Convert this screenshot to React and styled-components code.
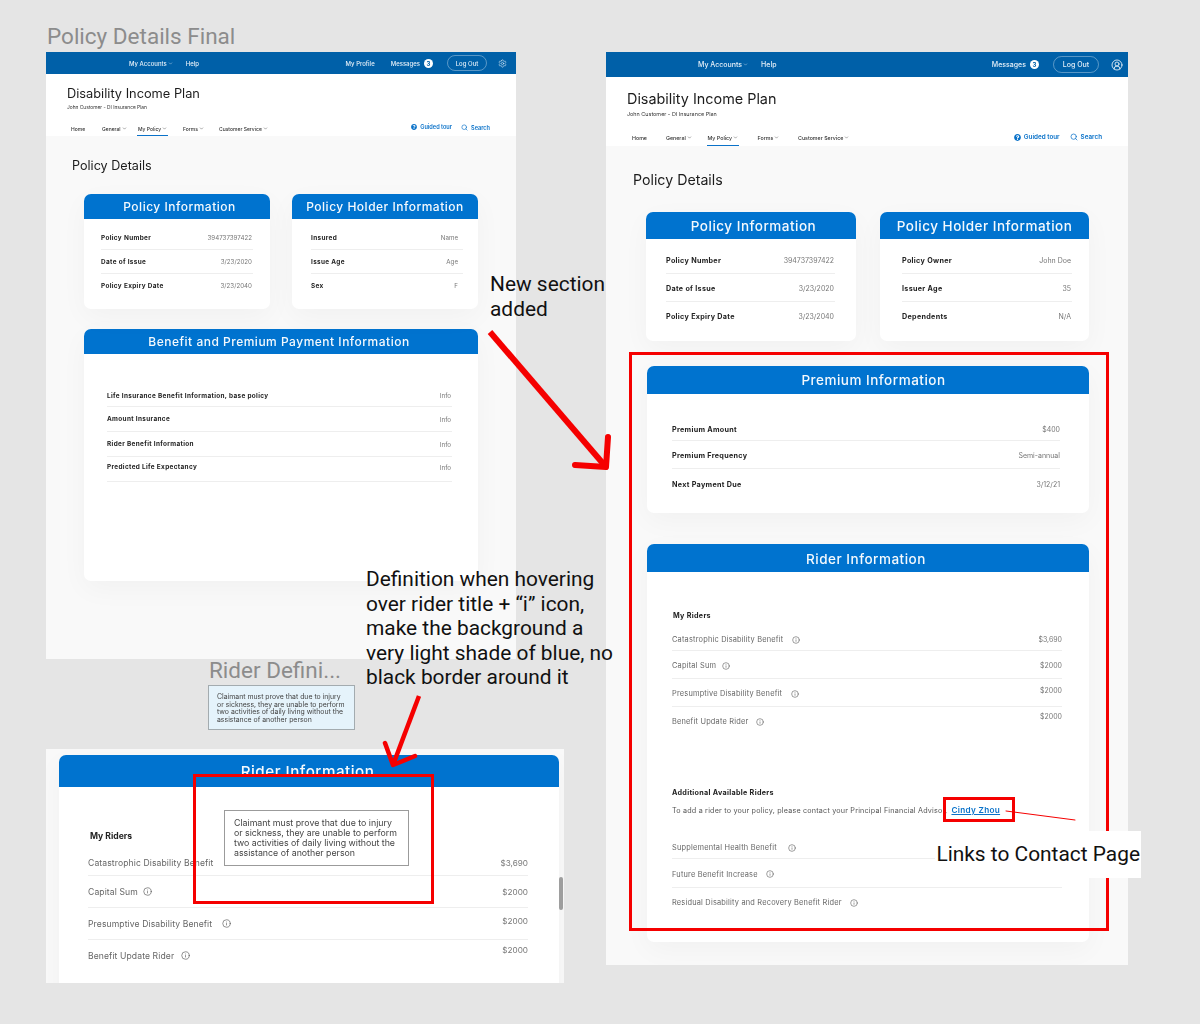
import React from 'react'
import styled, { createGlobalStyle } from 'styled-components'
import { ChevronDown, Settings, CircleUserRound, Search, Info } from 'lucide-react'
import { FaQuestionCircle } from 'react-icons/fa'

const GlobalStyle = createGlobalStyle`
  html, body { margin: 0; padding: 0; background: #e5e5e5; }
  * { box-sizing: border-box; }
`

const Canvas = styled.div`
  position: relative;
  width: 1200px;
  height: 1024px;
  overflow: hidden;
  background: #e5e5e5;
  font-family: Inter, "Open Sans", sans-serif;
`

const Frame = styled.section`
  position: absolute;
  left: ${p => p.$x}px;
  top: ${p => p.$y}px;
  width: ${p => p.$w}px;
  height: ${p => p.$h}px;
  background: #f9f9f9;
  overflow: hidden;
  filter: blur(0.35px);
`

const SmallFrame = styled(Frame)`
  --bar-h: 22px;
  --bar-pad: 83px;
  --bar-pad-r: 9px;
  --bar-font: 6px;
  --bar-gap: 13px;
  --bar-gap-r: 11px;
  --pill-left: 3px;
  --pill-w: 40px;
  --pill-h: 16px;
  --head-h: 62px;
  --head-top: 12px;
  --title: 12.8px;
  --title-h: 16px;
  --sub: 4.85px;
  --sub-top: 1px;
  --nav: 5px;
  --nav-top: 11px;
  --nav-h: 14px;
  --nav-left: 4px;
  --nav-cols: 31px 36px 45px 36px auto;
  --tool-font: 5.6px;
  --tool-gap: 9px;
  --tool-top: 2px;
  --tool-right: 26px;
  --page-title: 12.6px;
  --page-h: 16px;
  --page-top: 22px;
  --page-left: 26px;
  --card-title: 12px;
  --label: 6.4px;
  --label-ls: 0.35px;
  --value: 6.2px;
  --row-nudge: 0;
`

const BigFrame = styled(Frame)`
  --bar-h: 25px;
  --bar-pad: 92px;
  --bar-pad-r: 5px;
  --bar-font: 7px;
  --bar-gap: 13px;
  --bar-gap-r: 12px;
  --pill-left: 2px;
  --pill-w: 46px;
  --pill-h: 17px;
  --head-h: 69px;
  --head-top: 13px;
  --title: 14.4px;
  --title-h: 18px;
  --sub: 5.45px;
  --sub-top: 2px;
  --nav: 5.3px;
  --nav-top: 12px;
  --nav-h: 16px;
  --nav-left: 5px;
  --nav-cols: 34px 41.5px 50px 40.5px auto;
  --tool-font: 6.3px;
  --tool-gap: 10px;
  --tool-top: 3px;
  --tool-right: 26px;
  --page-title: 14.2px;
  --page-h: 18px;
  --page-top: 25px;
  --page-left: 27px;
  --card-title: 13.5px;
  --label: 7.2px;
  --label-ls: 0.3px;
  --value: 7px;
  --name: 7.4px;
  --name-ls: 0.2px;
  --row-nudge: 2px;
`

const ZoomFrame = styled(Frame)`
  --card-title: 15.2px;
  --label: 8.6px;
  --label-ls: 0;
  --value: 8.2px;
  --name: 8.6px;
  --name-ls: 0.1px;
  --row-nudge: 0;
`

const TopBar = styled.header`
  display: flex;
  align-items: center;
  height: var(--bar-h);
  padding: 0 var(--bar-pad-r) 0 var(--bar-pad);
  background: #0060a8;
  color: #e6f0f8;
  font-size: var(--bar-font);
  font-weight: 500;
`

const BarGroup = styled.div`
  display: flex;
  align-items: center;
  gap: ${p => (p.$right ? 'var(--bar-gap-r)' : 'var(--bar-gap)')};
  margin-left: ${p => (p.$right ? 'auto' : '0')};
`

const BarLink = styled.span`
  display: inline-flex;
  align-items: center;
  gap: 1px;
  margin-left: ${p => p.$left || 0}px;
  white-space: nowrap;
`

const Badge = styled.span`
  display: inline-flex;
  align-items: center;
  justify-content: center;
  width: 9px;
  height: 9px;
  margin-left: 3px;
  border-radius: 50%;
  background: #fff;
  color: #0060a8;
  font-size: 6px;
  font-weight: 700;
`

const LogOut = styled.span`
  display: inline-flex;
  align-items: center;
  justify-content: center;
  width: var(--pill-w);
  height: var(--pill-h);
  margin-left: var(--pill-left);
  border: 1px solid rgba(255, 255, 255, 0.35);
  border-radius: 9px;
`

const Head = styled.div`
  display: flex;
  flex-direction: column;
  height: var(--head-h);
  padding: var(--head-top) 0 0 21px;
  background: #fff;
`

const PlanTitle = styled.h1`
  margin: 0;
  font-size: var(--title);
  line-height: var(--title-h);
  font-weight: 400;
  color: #1c1c1c;
`

const PlanSub = styled.div`
  margin-top: var(--sub-top);
  font-size: var(--sub);
  line-height: 8px;
  color: #333;
`

const NavRow = styled.nav`
  display: flex;
  height: var(--nav-h);
  margin-top: var(--nav-top);
  padding: 0 var(--tool-right) 0 var(--nav-left);
`

const NavList = styled.div`
  display: grid;
  grid-template-columns: var(--nav-cols);
`

const NavItem = styled.span`
  display: inline-flex;
  align-items: center;
  justify-self: start;
  gap: 1px;
  height: 100%;
  padding: 0 ${p => (p.$active ? '1px' : '0')};
  margin-left: ${p => (p.$active ? '-1px' : '0')};
  border-bottom: 1px solid ${p => (p.$active ? '#0a72c9' : 'transparent')};
  font-size: var(--nav);
  font-weight: 500;
  color: #333;
  white-space: nowrap;
`

const Tools = styled.div`
  display: flex;
  align-items: flex-start;
  gap: var(--tool-gap);
  margin-left: auto;
  margin-top: var(--tool-top);
`

const ToolLink = styled.span`
  display: inline-flex;
  align-items: center;
  gap: 3px;
  font-size: var(--tool-font);
  font-weight: 600;
  color: #0a72c9;
  white-space: nowrap;
`

const PageTitle = styled.h2`
  margin: var(--page-top) 0 0 var(--page-left);
  font-size: var(--page-title);
  line-height: var(--page-h);
  font-weight: 400;
  color: #1c1c1c;
`

const CardRow = styled.div`
  display: flex;
  gap: ${p => p.$gap}px;
  margin: ${p => p.$top}px 0 0 ${p => p.$left}px;
`

const Card = styled.article`
  flex: none;
  width: ${p => p.$w}px;
  height: ${p => p.$h}px;
  margin: ${p => p.$top || 0}px 0 0 ${p => p.$left || 0}px;
  background: #fff;
  border-radius: 7px;
  box-shadow: 0 8px 28px rgba(0, 0, 0, 0.035);
`

const CardHeader = styled.h3`
  display: flex;
  align-items: center;
  justify-content: center;
  height: ${p => p.$h}px;
  margin: 0;
  padding: ${p => p.$pt || 0}px ${p => p.$pr || 0}px 0 ${p => p.$pl || 0}px;
  background: #0073cf;
  border-radius: 7px 7px 0 0;
  color: #f4f9fd;
  font-size: var(--card-title);
  font-weight: 500;
  letter-spacing: 0.5px;
  white-space: nowrap;
`

const RowList = styled.div`
  padding: ${p => p.$top}px ${p => p.$right}px 0 ${p => p.$left}px;
`

const Row = styled.div`
  display: flex;
  align-items: center;
  justify-content: space-between;
  height: ${p => p.$h}px;
  padding-top: var(--row-nudge);
  padding-bottom: ${p => p.$pb || 0}px;
  border-bottom: 1px solid ${p => (p.$last ? 'transparent' : '#eeeeee')};
`

const Label = styled.span`
  font-size: var(--label);
  letter-spacing: var(--label-ls);
  font-weight: 700;
  color: #222;
  white-space: nowrap;
`

const Value = styled.span`
  margin-right: ${p => p.$inset || 0}px;
  margin-bottom: ${p => p.$raise || 0}px;
  font-size: var(--value);
  font-weight: 400;
  color: #777;
  white-space: nowrap;
`

const RiderName = styled.span`
  display: inline-flex;
  align-items: center;
  gap: ${p => p.$gap || 8}px;
  font-size: var(--name);
  letter-spacing: var(--name-ls);
  color: #666;
  white-space: nowrap;
`

const SubHead = styled.div`
  height: ${p => p.$h}px;
  margin: ${p => p.$top || 0}px 0 ${p => p.$bottom || 0}px ${p => p.$left || 0}px;
  font-size: var(--label);
  letter-spacing: var(--label-ls);
  line-height: ${p => p.$h}px;
  font-weight: 700;
  color: #222;
`

const Hint = styled.p`
  height: 10px;
  margin: 7px 0 20px;
  font-size: 7.2px;
  letter-spacing: 0.2px;
  line-height: 10px;
  color: #555;
  white-space: nowrap;
`

const ContactLink = styled.a`
  margin-left: 2px;
  font-size: 8.2px;
  letter-spacing: 0.3px;
  color: #0a72c9;
  font-weight: 600;
  text-decoration: underline;
`

const FrameName = styled.div`
  position: absolute;
  left: ${p => p.$x}px;
  top: ${p => p.$y}px;
  font-family: Roboto, sans-serif;
  font-size: 22.5px;
  line-height: 26px;
  color: #8c8c8c;
  white-space: nowrap;
`

const Note = styled.div`
  position: absolute;
  left: ${p => p.$x}px;
  top: ${p => p.$y}px;
  font-family: Roboto, sans-serif;
  font-size: 20.9px;
  line-height: 24.5px;
  color: #111;
  white-space: pre;
`

const LinkNote = styled(Note)`
  display: flex;
  align-items: center;
  justify-content: flex-end;
  width: 206px;
  height: 47px;
  padding-right: 1px;
  background: #fff;
`

const DefinitionBox = styled.div`
  position: absolute;
  left: 208px;
  top: 685px;
  width: 147px;
  height: 45px;
  padding: 7px 0 0 8px;
  border: 1px solid #a3abaf;
  background: #e5f3fb;
  font-size: 6.9px;
  line-height: 7.7px;
  color: #444;
  white-space: pre;
  filter: blur(0.35px);
`

const Tooltip = styled.div`
  position: absolute;
  left: 178px;
  top: 61px;
  width: 185px;
  height: 56px;
  padding: 7px 0 0 9px;
  border: 1px solid #9b9b9b;
  background: #fff;
  font-size: 8.8px;
  line-height: 10px;
  color: #444;
  white-space: pre;
`

const HeaderPatch = styled.div`
  position: absolute;
  left: 150px;
  top: 26px;
  width: 230px;
  height: 12px;
  background: #0073cf;
`

const ScrollThumb = styled.div`
  position: absolute;
  right: 1px;
  top: 128px;
  width: 4px;
  height: 33px;
  border-radius: 2px;
  background: #9e9e9e;
`

const RedBox = styled.div`
  position: absolute;
  left: ${p => p.$x}px;
  top: ${p => p.$y}px;
  width: ${p => p.$w}px;
  height: ${p => p.$h}px;
  border: 3px solid #f50000;
`

const Markup = styled.svg`
  position: absolute;
  left: 0;
  top: 0;
  width: 1200px;
  height: 1024px;
  pointer-events: none;
`

const Chevron = () => <ChevronDown size={5} strokeWidth={2} />
const InfoIcon = ({ size = 8 }) => <Info size={size} strokeWidth={1.7} color="#555" />

const policyRows = [
  ['Policy Number', '394737397422'],
  ['Date of Issue', '3/23/2020'],
  ['Policy Expiry Date', '3/23/2040'],
]

const DEFINITION =
  'Claimant must prove that due to injury\nor sickness, they are unable to perform\ntwo activities of daily living without the\nassistance of another person'

const Nav = ({ iconSize }) => (
  <NavRow>
    <NavList>
      <NavItem>Home</NavItem>
      <NavItem>General <Chevron /></NavItem>
      <NavItem $active>My Policy <Chevron /></NavItem>
      <NavItem>Forms <Chevron /></NavItem>
      <NavItem>Customer Service <Chevron /></NavItem>
    </NavList>
    <Tools>
      <ToolLink><FaQuestionCircle size={iconSize - 1} /> Guided tour</ToolLink>
      <ToolLink><Search size={iconSize} strokeWidth={2.2} /> Search</ToolLink>
    </Tools>
  </NavRow>
)

const InfoRows = ({ rows, h, inset }) =>
  rows.map(([label, value], i) => (
    <Row key={label} $h={h} $last={i === rows.length - 1}>
      <Label>{label}</Label>
      <Value $inset={inset}>{value}</Value>
    </Row>
  ))

const App = () => (
  <Canvas>
    <GlobalStyle />
    <FrameName $x={47} $y={23}>Policy Details Final</FrameName>

    <SmallFrame $x={46} $y={52} $w={470} $h={607}>
      <TopBar>
        <BarGroup>
          <BarLink>My Accounts <Chevron /></BarLink>
          <BarLink>Help</BarLink>
        </BarGroup>
        <BarGroup $right>
          <BarLink>My Profile</BarLink>
          <BarLink $left={5}>Messages<Badge>3</Badge></BarLink>
          <LogOut>Log Out</LogOut>
          <Settings size={9} strokeWidth={1.5} />
        </BarGroup>
      </TopBar>
      <Head>
        <PlanTitle>Disability Income Plan</PlanTitle>
        <PlanSub>John Customer - DI Insurance Plan</PlanSub>
        <Nav iconSize={7} />
      </Head>
      <PageTitle>Policy Details</PageTitle>
      <CardRow $top={20} $left={38} $gap={22}>
        <Card $w={186} $h={115}>
          <CardHeader $h={25} $pl={5}>Policy Information</CardHeader>
          <RowList $top={7} $left={17} $right={17}>
            <InfoRows rows={policyRows} h={24} inset={1} />
          </RowList>
        </Card>
        <Card $w={186} $h={115}>
          <CardHeader $h={25}>Policy Holder Information</CardHeader>
          <RowList $top={7} $left={19} $right={15}>
            <InfoRows rows={[['Insured', 'Name'], ['Issue Age', 'Age'], ['Sex', 'F']]} h={24} inset={5} />
          </RowList>
        </Card>
      </CardRow>
      <Card $w={394} $h={252} $top={20} $left={38}>
        <CardHeader $h={25} $pr={4}>Benefit and Premium Payment Information</CardHeader>
        <RowList $top={31} $left={23} $right={26}>
          <Row $h={22}><Label>Life Insurance Benefit Information, base policy</Label><Value $inset={1}>Info</Value></Row>
          <Row $h={25}><Label>Amount Insurance</Label><Value $inset={1}>Info</Value></Row>
          <Row $h={25}><Label>Rider Benefit Information</Label><Value $inset={1}>Info</Value></Row>
          <Row $h={25} $pb={4}><Label>Predicted Life Expectancy</Label><Value $inset={1}>Info</Value></Row>
        </RowList>
      </Card>
    </SmallFrame>

    <BigFrame $x={606} $y={52} $w={522} $h={913}>
      <TopBar>
        <BarGroup>
          <BarLink>My Accounts <Chevron /></BarLink>
          <BarLink>Help</BarLink>
        </BarGroup>
        <BarGroup $right>
          <BarLink>Messages<Badge>3</Badge></BarLink>
          <LogOut>Log Out</LogOut>
          <CircleUserRound size={12} strokeWidth={1.6} color="#fff" />
        </BarGroup>
      </TopBar>
      <Head>
        <PlanTitle>Disability Income Plan</PlanTitle>
        <PlanSub>John Customer - DI Insurance Plan</PlanSub>
        <Nav iconSize={8} />
      </Head>
      <PageTitle>Policy Details</PageTitle>
      <CardRow $top={23} $left={40} $gap={24}>
        <Card $w={210} $h={129}>
          <CardHeader $h={27} $pl={5}>Policy Information</CardHeader>
          <RowList $top={7} $left={20} $right={21}>
            <InfoRows rows={policyRows} h={28} inset={1} />
          </RowList>
        </Card>
        <Card $w={209} $h={129}>
          <CardHeader $h={27}>Policy Holder Information</CardHeader>
          <RowList $top={7} $left={22} $right={17}>
            <InfoRows rows={[['Policy Owner', 'John Doe'], ['Issuer Age', '35'], ['Dependents', 'N/A']]} h={28} inset={1} />
          </RowList>
        </Card>
      </CardRow>
      <Card $w={442} $h={147} $top={25} $left={41}>
        <CardHeader $h={28} $pl={11}>Premium Information</CardHeader>
        <RowList $top={23} $left={25} $right={29}>
          <Row $h={24}><Label>Premium Amount</Label><Value>$400</Value></Row>
          <Row $h={28}><Label>Premium Frequency</Label><Value>Semi-annual</Value></Row>
          <Row $h={30} $last><Label>Next Payment Due</Label><Value>3/12/21</Value></Row>
        </RowList>
      </Card>
      <Card $w={442} $h={398} $top={31} $left={41}>
        <CardHeader $h={28} $pr={4} $pt={2}>Rider Information</CardHeader>
        <RowList $top={39} $left={25} $right={27}>
          <SubHead $h={10} $left={1} $bottom={6}>My Riders</SubHead>
          <Row $h={24}><RiderName $gap={9}>Catastrophic Disability Benefit <InfoIcon /></RiderName><Value>$3,690</Value></Row>
          <Row $h={28}><RiderName $gap={6}>Capital Sum <InfoIcon /></RiderName><Value>$2000</Value></Row>
          <Row $h={28}><RiderName $gap={9}>Presumptive Disability Benefit <InfoIcon /></RiderName><Value $raise={6}>$2000</Value></Row>
          <Row $h={28} $last><RiderName>Benefit Update Rider <InfoIcon /></RiderName><Value $raise={10}>$2000</Value></Row>
          <SubHead $h={10} $top={53}>Additional Available Riders</SubHead>
          <Hint>To add a rider to your policy, please contact your Principal Financial Advisor, <ContactLink>Cindy Zhou</ContactLink></Hint>
          <Row $h={24}><RiderName $gap={11}>Supplemental Health Benefit <InfoIcon /></RiderName></Row>
          <Row $h={29}><RiderName>Future Benefit Increase <InfoIcon /></RiderName></Row>
          <Row $h={28} $last><RiderName>Residual Disability and Recovery Benefit Rider <InfoIcon /></RiderName></Row>
        </RowList>
      </Card>
    </BigFrame>

    <ZoomFrame $x={46} $y={749} $w={518} $h={234}>
      <Card $w={500} $h={300} $top={6} $left={13}>
        <CardHeader $h={32} $pr={3}>Rider Information</CardHeader>
        <RowList $top={43} $left={29} $right={31}>
          <SubHead $h={12} $left={2} $bottom={8}>My Riders</SubHead>
          <Row $h={26}><RiderName>Catastrophic Disability Benefit</RiderName><Value>$3,690</Value></Row>
          <Row $h={32}><RiderName $gap={5}>Capital Sum <InfoIcon size={9} /></RiderName><Value>$2000</Value></Row>
          <Row $h={32}><RiderName $gap={10}>Presumptive Disability Benefit <InfoIcon size={9} /></RiderName><Value $raise={6}>$2000</Value></Row>
          <Row $h={32} $last><RiderName $gap={7}>Benefit Update Rider <InfoIcon size={9} /></RiderName><Value $raise={12}>$2000</Value></Row>
        </RowList>
      </Card>
      <HeaderPatch />
      <Tooltip>{DEFINITION}</Tooltip>
      <ScrollThumb />
    </ZoomFrame>

    <FrameName $x={209} $y={657}>Rider Defini...</FrameName>
    <DefinitionBox>{DEFINITION}</DefinitionBox>

    <Note $x={490} $y={272}>{'New section\nadded'}</Note>
    <Note $x={366} $y={567}>{'Definition when hovering\nover rider title + “i” icon,\nmake the background a\nvery light shade of blue, no\nblack border around it'}</Note>

    <RedBox $x={629} $y={352} $w={480} $h={579} />
    <RedBox $x={193} $y={774} $w={241} $h={130} />
    <RedBox $x={943} $y={797} $w={72} $h={25} />

    <Markup viewBox="0 0 1200 1024">
      <g stroke="#f50000" fill="none" strokeLinecap="round" strokeLinejoin="round">
        <path d="M490 332 L606 467" strokeWidth="6" strokeLinecap="butt" />
        <path d="M575 465 L606 467 L608 437" strokeWidth="6" />
        <path d="M419 696 L393 765" strokeWidth="4.5" strokeLinecap="butt" />
        <path d="M385 743 L393 765 L415 756" strokeWidth="4.5" />
        <path d="M1006 811 L1075 820" strokeWidth="1" />
      </g>
    </Markup>

    <LinkNote $x={935} $y={831}>Links to Contact Page</LinkNote>
  </Canvas>
)

export default App
